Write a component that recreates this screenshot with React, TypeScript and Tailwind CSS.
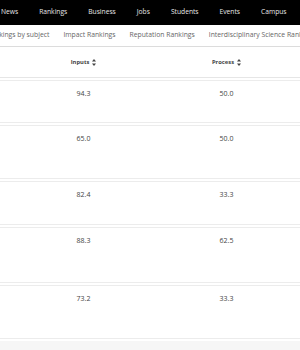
import React from "react";

const mainNav = ["News", "Rankings", "Business", "Jobs", "Students", "Events", "Campus"];
const subNav = [
  "Rankings by subject",
  "Impact Rankings",
  "Reputation Rankings",
  "Interdisciplinary Science Rankings",
];

interface ScoreRow {
  inputs: string;
  process: string;
  height: string;
}

const rows: ScoreRow[] = [
  { inputs: "94.3", process: "50.0", height: "h-[43px]" },
  { inputs: "65.0", process: "50.0", height: "h-[54px]" },
  { inputs: "82.4", process: "33.3", height: "h-[44px]" },
  { inputs: "88.3", process: "62.5", height: "h-[56px]" },
  { inputs: "73.2", process: "33.3", height: "h-[54px]" },
];

function SortIcon() {
  return (
    <svg width="4" height="7" viewBox="0 0 4 7" className="ml-[3px] inline-block">
      <path d="M2 0 L4 2.5 L0 2.5 Z" fill="#444" />
      <path d="M2 7 L4 4.5 L0 4.5 Z" fill="#444" />
    </svg>
  );
}

export default function App() {
  return (
    <div className="h-[350px] w-[300px] overflow-hidden bg-[#f6f6f6] font-['Open_Sans',sans-serif]">
      <nav className="flex h-[25px] items-center gap-[21px] overflow-hidden whitespace-nowrap bg-black pl-[1px] text-[6.7px] font-normal text-[#e8e8e8]">
        {mainNav.map((item) => (
          <span key={item}>{item}</span>
        ))}
      </nav>

      <div className="flex h-[22px] items-center gap-[14px] overflow-hidden whitespace-nowrap border-b border-[#dcdcdc] bg-white text-[6.8px] text-[#666] shadow-[0_1px_2px_rgba(0,0,0,0.08)]">
        {subNav.map((item, i) => (
          <span key={item} className={i === 0 ? "-ml-[13px]" : ""}>
            {item}
          </span>
        ))}
      </div>

      <div className="bg-white">
        <div className="grid h-[31px] grid-cols-[12px_143px_143px] items-center border-b border-[#e6e6e6] text-[5.8px] font-bold text-[#444]">
          <span />
          <span className="flex items-center justify-center">
            Inputs
            <SortIcon />
          </span>
          <span className="flex items-center justify-center">
            Process
            <SortIcon />
          </span>
        </div>

        {rows.map((row, i) => (
          <div
            key={i}
            className={`mt-[2px] grid grid-cols-[12px_143px_143px] border-y border-[#ececec] pt-[8px] text-[7px] leading-[10px] text-[#444] ${row.height}`}
          >
            <span />
            <span className="text-center">{row.inputs}</span>
            <span className="text-center">{row.process}</span>
          </div>
        ))}
        <div className="h-[2px]" />
      </div>
    </div>
  );
}
